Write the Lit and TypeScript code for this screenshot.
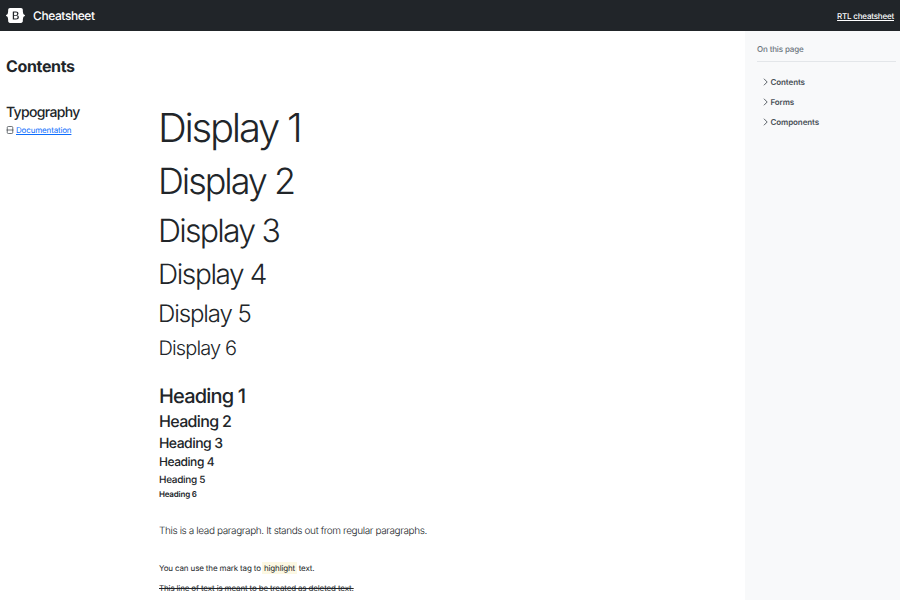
import { LitElement, html, css } from "lit";
import { customElement } from "lit/decorators.js";

@customElement("app-root")
export class AppRoot extends LitElement {
  static styles = css`
    :host {
      display: block;
      height: 600px;
      overflow: hidden;
      background: #fff;
      color: #212529;
      font: 400 8px/1.5 Inter, "Liberation Sans", sans-serif;
      text-rendering: geometricPrecision;
    }
    * { box-sizing: border-box; }
    p, h1, h2, h3, h4, h5, h6 { margin: 0; white-space: nowrap; }
    .bar {
      display: flex;
      align-items: center;
      height: 31px;
      padding: 0 6px;
      background: #212529;
      color: #fff;
    }
    .logo { display: block; width: 19px; height: 15px; }
    .brand { margin-left: 8px; font-size: 12px; font-weight: 500; line-height: 18px; letter-spacing: -0.42px; }
    .rtl { margin-left: auto; color: #fff; font-weight: 500; letter-spacing: -0.2px; }
    .page { display: grid; grid-template-columns: 745px 155px; height: 569px; }
    .main { padding: 26px 6px 0; overflow: hidden; }
    .title { font-size: 16px; font-weight: 700; line-height: 19px; letter-spacing: -0.35px; }
    .article { display: grid; grid-template-columns: 153px 1fr; margin-top: 28px; }
    .sub { font-size: 14px; font-weight: 500; line-height: 18px; letter-spacing: -0.67px; }
    .doc { display: flex; align-items: center; margin-top: 2px; line-height: 12px; letter-spacing: -0.16px; }
    .doc svg { width: 8px; height: 8px; margin-right: 2px; }
    .doc a { color: #0d6efd; }
    .d { font-weight: 300; margin: 0 0 8px -1px; }
    .d1 { font-size: 40px; line-height: 48px; letter-spacing: -2.25px; }
    .d2 { font-size: 36px; line-height: 42px; margin-bottom: 10px; letter-spacing: -2.05px; }
    .d3 { font-size: 32px; line-height: 38px; letter-spacing: -1.75px; }
    .d4 { font-size: 28px; line-height: 32px; margin-bottom: 10px; letter-spacing: -1.4px; }
    .d5 { font-size: 24px; line-height: 28px; letter-spacing: -1.1px; }
    .d6 { font-size: 20px; line-height: 24px; letter-spacing: -0.87px; margin-left: -0.5px; }
    .heads { margin-top: 24px; }
    .h { font-weight: 500; margin-bottom: 4px; }
    .h1 { font-size: 20px; line-height: 24px; letter-spacing: -0.82px; }
    .h2 { font-size: 16px; line-height: 18px; margin-bottom: 6px; letter-spacing: -0.65px; }
    .h3 { font-size: 14px; line-height: 16px; letter-spacing: -0.55px; }
    .h4 { font-size: 12px; line-height: 12px; margin-bottom: 6px; letter-spacing: -0.45px; }
    .h5 { font-size: 10px; line-height: 12px; letter-spacing: -0.3px; }
    .h6 { font-size: 8px; line-height: 8px; font-weight: 600; letter-spacing: -0.2px; }
    .lead { margin-top: 26px; font-size: 10px; font-weight: 300; line-height: 15px; letter-spacing: -0.38px; }
    .body { margin-top: 23px; letter-spacing: -0.145px; }
    .body p { height: 12px; margin-bottom: 8px; }
    mark { padding: 1px 1.5px; margin-left: -0.5px; background: #fcf8e3; color: #212529; }
    .aside { background: #f8f9fa; padding: 12px 4px 0 12px; }
    .aside-title { padding-bottom: 6px; border-bottom: 1px solid #e3e6e9; color: #6c757d; font-weight: 500; letter-spacing: -0.15px; }
    .item { display: flex; align-items: center; height: 20px; padding-left: 6px; color: #495057; font-weight: 600; letter-spacing: -0.1px; }
    .item svg { width: 6px; height: 8px; margin-right: 1.5px; }
    .nav { margin-top: 10px; }
  `;

  render() {
    return html`
      <header class="bar">
        <svg class="logo" viewBox="0 0 118 94" fill="#fff">
          <path fill-rule="evenodd" clip-rule="evenodd" d="M24.509 0c-6.733 0-11.715 5.893-11.492 12.284.214 6.14-.064 14.092-2.066 20.577C8.943 39.365 5.547 43.485 0 44.014v5.972c5.547.529 8.943 4.649 10.951 11.153 2.002 6.485 2.28 14.437 2.066 20.577C12.794 88.106 17.776 94 24.51 94H93.5c6.733 0 11.714-5.893 11.491-12.284-.214-6.14.064-14.092 2.066-20.577 2.009-6.504 5.396-10.624 10.943-11.153v-5.972c-5.547-.529-8.934-4.649-10.943-11.153-2.002-6.484-2.28-14.437-2.066-20.577C105.214 5.894 100.233 0 93.5 0H24.508zM80 57.863C80 66.663 73.436 72 62.543 72H44a2 2 0 01-2-2V24a2 2 0 012-2h18.437c9.083 0 15.044 4.92 15.044 12.474 0 5.302-4.01 10.049-9.119 10.88v.277C75.317 46.394 80 51.21 80 57.863zM60.521 28.34H49.948v14.934h8.905c6.884 0 10.68-2.772 10.68-7.727 0-4.643-3.264-7.207-9.012-7.207zM49.948 49.2v16.458H60.91c7.167 0 10.964-2.876 10.964-8.281 0-5.406-3.903-8.178-11.425-8.178H49.948z"/>
        </svg>
        <span class="brand">Cheatsheet</span>
        <a class="rtl" href="#">RTL cheatsheet</a>
      </header>
      <div class="page">
        <main class="main">
          <h2 class="title">Contents</h2>
          <section class="article">
            <div>
              <h3 class="sub">Typography</h3>
              <div class="doc">
                <svg viewBox="0 0 16 16" fill="none" stroke="#343a40" stroke-width="1.4">
                  <path d="M2.5 8V3a2 2 0 0 1 2-2h7a2 2 0 0 1 2 2v5M2.5 8v5a2 2 0 0 0 2 2h7a2 2 0 0 0 2-2V8M1 8h14"/>
                </svg>
                <a href="#">Documentation</a>
              </div>
            </div>
            <div>
              ${[1, 2, 3, 4, 5, 6].map((n) => html`<p class="d d${n}">Display ${n}</p>`)}
              <div class="heads">
                ${[1, 2, 3, 4, 5, 6].map((n) => html`<p class="h h${n}">Heading ${n}</p>`)}
              </div>
              <p class="lead">This is a lead paragraph. It stands out from regular paragraphs.</p>
              <div class="body">
                <p>You can use the mark tag to <mark>highlight</mark> text.</p>
                <p><del>This line of text is meant to be treated as deleted text.</del></p>
              </div>
            </div>
          </section>
        </main>
        <aside class="aside">
          <p class="aside-title">On this page</p>
          <nav class="nav">
            ${["Contents", "Forms", "Components"].map(
              (t) => html`<div class="item">
                <svg viewBox="0 0 6 8" fill="none" stroke="#495057" stroke-width="0.9" stroke-linecap="round" stroke-linejoin="round"><path d="M1.2 1l3 3-3 3"/></svg>
                <span>${t}</span>
              </div>`
            )}
          </nav>
        </aside>
      </div>
    `;
  }
}
